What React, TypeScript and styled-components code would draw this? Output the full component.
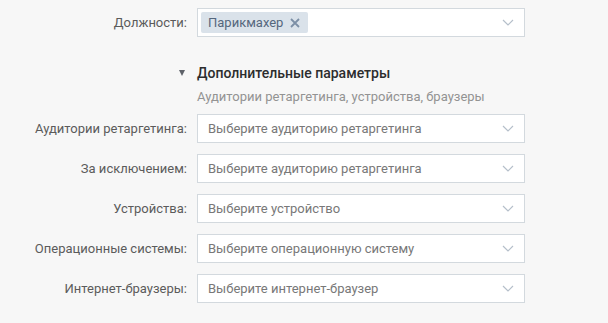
import styled, { createGlobalStyle } from "styled-components";

const GlobalStyle = createGlobalStyle`
  html, body {
    margin: 0;
    padding: 0;
    background: #f7f7f7;
    font-family: Roboto, "Open Sans", Arial, sans-serif;
    -webkit-font-smoothing: antialiased;
  }
`;

const Page = styled.div`
  padding-top: 8px;
  width: 608px;
  height: 323px;
  box-sizing: border-box;
`;

const Row = styled.div<{ $mt?: number }>`
  display: grid;
  grid-template-columns: 187px 328px;
  column-gap: 10px;
  align-items: center;
  margin-top: ${(p) => p.$mt ?? 0}px;
`;

const Label = styled.div`
  text-align: right;
  font-size: 13px;
  color: #5b5b5b;
  white-space: nowrap;
`;

const Field = styled.div`
  height: 29px;
  box-sizing: border-box;
  border: 1px solid #d3d9de;
  background: #fff;
  display: flex;
  align-items: center;
  padding: 0 10px 0 10px;
  font-size: 13px;
  color: #787878;
`;

const Placeholder = styled.span`
  flex: 1;
  white-space: nowrap;
`;

const Tag = styled.span`
  display: inline-flex;
  align-items: center;
  height: 21px;
  padding: 0 8px 0 7px;
  margin-left: -7px;
  background: #dae2ea;
  border-radius: 2px;
  color: #55677d;
  font-size: 13px;
  gap: 7px;
`;

const Spacer = styled.span`
  flex: 1;
`;

const Toggle = styled.div`
  justify-self: end;
  margin-right: 2px;
  width: 0;
  height: 0;
  border-left: 3.5px solid transparent;
  border-right: 3.5px solid transparent;
  border-top: 6px solid #5e6269;
`;

const SectionTitle = styled.div`
  font-size: 14px;
  font-weight: 500;
  color: #2c2d2e;
  line-height: 16px;
`;

const SectionHint = styled.div`
  font-size: 13px;
  color: #939393;
  line-height: 16px;
`;

const Chevron = () => (
  <svg width="12" height="7" viewBox="0 0 12 7" fill="none">
    <path d="M1 1l5 5 5-5" stroke="#b5bfca" strokeWidth="1.2" />
  </svg>
);

const Cross = () => (
  <svg width="10" height="10" viewBox="0 0 10 10" fill="none">
    <path d="M1 1l8 8M9 1l-8 8" stroke="#7c8fa6" strokeWidth="1.8" />
  </svg>
);

const fields = [
  ["Аудитории ретаргетинга:", "Выберите аудиторию ретаргетинга"],
  ["За исключением:", "Выберите аудиторию ретаргетинга"],
  ["Устройства:", "Выберите устройство"],
  ["Операционные системы:", "Выберите операционную систему"],
  ["Интернет-браузеры:", "Выберите интернет-браузер"],
];

export default function App() {
  return (
    <Page>
      <GlobalStyle />
      <Row>
        <Label>Должности:</Label>
        <Field>
          <Tag>
            Парикмахер
            <Cross />
          </Tag>
          <Spacer />
          <Chevron />
        </Field>
      </Row>
      <Row $mt={28}>
        <Toggle />
        <SectionTitle>Дополнительные параметры</SectionTitle>
      </Row>
      <Row $mt={8}>
        <span />
        <SectionHint>Аудитории ретаргетинга, устройства, браузеры</SectionHint>
      </Row>
      {fields.map(([label, ph], i) => (
        <Row key={label} $mt={i === 0 ? 9 : 11}>
          <Label>{label}</Label>
          <Field>
            <Placeholder>{ph}</Placeholder>
            <Chevron />
          </Field>
        </Row>
      ))}
    </Page>
  );
}
